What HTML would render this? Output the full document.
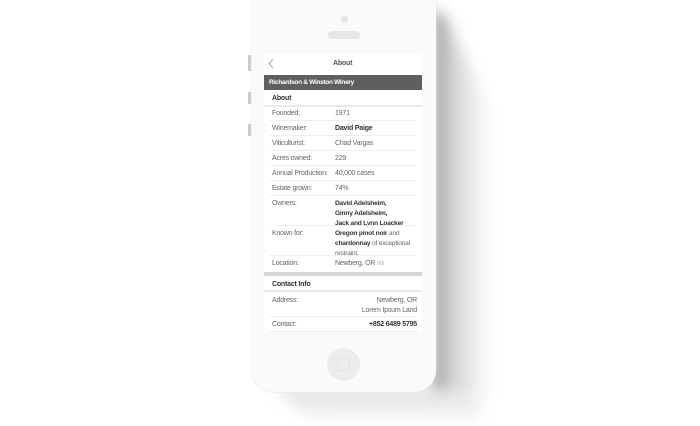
<!DOCTYPE html>
<html><head><style>
*{margin:0;padding:0;box-sizing:border-box}
body{width:700px;height:426px;background:#fff;position:relative;overflow:hidden;font-family:"Liberation Sans",Arial,sans-serif;color:#444}
.a{position:absolute}
.t{position:absolute;font-size:7px;letter-spacing:-0.2px;color:#666;white-space:nowrap;line-height:10px}
.b{font-weight:bold;color:#333}
.ln{position:absolute;left:270px;width:147px;height:1px;background:#eee}
</style></head><body>
<svg class="a" style="left:0;top:0" width="700" height="426">
<defs>
<filter id="bl" x="-50%" y="-50%" width="200%" height="200%"><feGaussianBlur stdDeviation="7"/></filter>
<linearGradient id="g" x1="0" y1="0" x2="1" y2="0"><stop offset="0" stop-color="#777"/><stop offset="0.35" stop-color="#ccc"/><stop offset="1" stop-color="#fff"/></linearGradient>
<linearGradient id="g2" x1="0" y1="0" x2="0" y2="1"><stop offset="0" stop-color="#bbb"/><stop offset="1" stop-color="#fff"/></linearGradient>
</defs>
<polygon points="432,10 445,15 492,110 492,400 432,390" fill="url(#g)" filter="url(#bl)" opacity="0.8"/>
<polygon points="275,390 432,390 480,400 480,426 320,426" fill="url(#g2)" filter="url(#bl)" opacity="0.5"/>
</svg>
<div class="a" style="left:252px;top:-30px;width:184px;height:422px;background:#fafafa;border-radius:22px;box-shadow:0 0 2px #ddd"></div>
<div class="a" style="left:248px;top:55px;width:3px;height:16px;background:#ccc"></div>
<div class="a" style="left:248px;top:92px;width:3px;height:12px;background:#ccc"></div>
<div class="a" style="left:248px;top:124px;width:3px;height:12px;background:#ccc"></div>
<div class="a" style="left:341px;top:16px;width:7px;height:7px;border-radius:50%;background:#e6e6e6"></div>
<div class="a" style="left:328px;top:31px;width:32px;height:8px;border-radius:4px;background:#e6e6e6"></div>
<div class="a" style="left:327px;top:348px;width:33px;height:33px;border-radius:50%;background:#ececec"></div>
<div class="a" style="left:337px;top:358px;width:13px;height:13px;border-radius:3px;border:1px solid #e2e2e2"></div>
<div class="a" style="left:264px;top:54px;width:158px;height:278px;background:#fff"></div>
<svg class="a" style="left:266px;top:58px" width="10" height="12"><path d="M7 1 L3 5.5 L7 10" fill="none" stroke="#aaa" stroke-width="1"/></svg>
<div class="t b" style="left:333px;top:59px;color:#555">About</div>
<div class="a" style="left:264px;top:75px;width:158px;height:15px;background:#5f5f5f"></div>
<div class="t" style="left:269px;top:78px;color:#fff;font-weight:bold;font-size:6.5px;letter-spacing:-0.3px">Richardson &amp; Winston Winery</div>
<div class="t b" style="left:272px;top:94px">About</div>
<div class="a" style="left:264px;top:105px;width:158px;height:2px;background:#e8e8e8"></div>
<div class="t" style="left:272px;top:109px">Founded:</div><div class="t" style="left:335px;top:109px">1971</div>
<div class="ln" style="top:120px"></div>
<div class="t" style="left:272px;top:124px">Winemaker:</div><div class="t b" style="left:335px;top:124px">David Paige</div>
<div class="ln" style="top:135px"></div>
<div class="t" style="left:272px;top:139px">Viticulturist:</div><div class="t" style="left:335px;top:139px">Chad Vargas</div>
<div class="ln" style="top:150px"></div>
<div class="t" style="left:272px;top:154px">Acres owned:</div><div class="t" style="left:335px;top:154px">229</div>
<div class="ln" style="top:165px"></div>
<div class="t" style="left:272px;top:169px">Annual Production:</div><div class="t" style="left:335px;top:169px">40,000 cases</div>
<div class="ln" style="top:180px"></div>
<div class="t" style="left:272px;top:184px">Estate grown:</div><div class="t" style="left:335px;top:184px">74%</div>
<div class="ln" style="top:195px"></div>
<div class="t" style="left:272px;top:199px">Owners:</div><div class="t b" style="left:335px;top:199px;font-size:6.6px">David Adelsheim,<br>Ginny Adelsheim,<br>Jack and Lynn Loacker</div>
<div class="ln" style="top:225px"></div>
<div class="t" style="left:272px;top:229px">Known for:</div><div class="t" style="left:335px;top:229px;font-size:6.6px"><b style="color:#333">Oregon pinot noir</b> and<br><b style="color:#333">chardonnay</b> of exceptional<br>restraint.</div>
<div class="ln" style="top:255px"></div>
<div class="t" style="left:272px;top:259px">Location:</div><div class="t" style="left:335px;top:259px">Newberg, OR <span style="color:#bbb;font-size:6px">IIIII</span></div>
<div class="a" style="left:264px;top:272px;width:158px;height:4px;background:#d6d6d6"></div>
<div class="t b" style="left:272px;top:280px">Contact Info</div>
<div class="a" style="left:264px;top:290px;width:158px;height:2px;background:#e8e8e8"></div>
<div class="t" style="left:272px;top:296px">Address:</div><div class="t" style="right:283px;top:296px;text-align:right">Newberg, OR<br>Lorem Ipsum Land</div>
<div class="ln" style="top:316px"></div>
<div class="t" style="left:272px;top:320px">Contact:</div><div class="t b" style="right:283px;top:320px">+852 6489 5795</div>
<div class="ln" style="top:331px"></div>
</body></html>
